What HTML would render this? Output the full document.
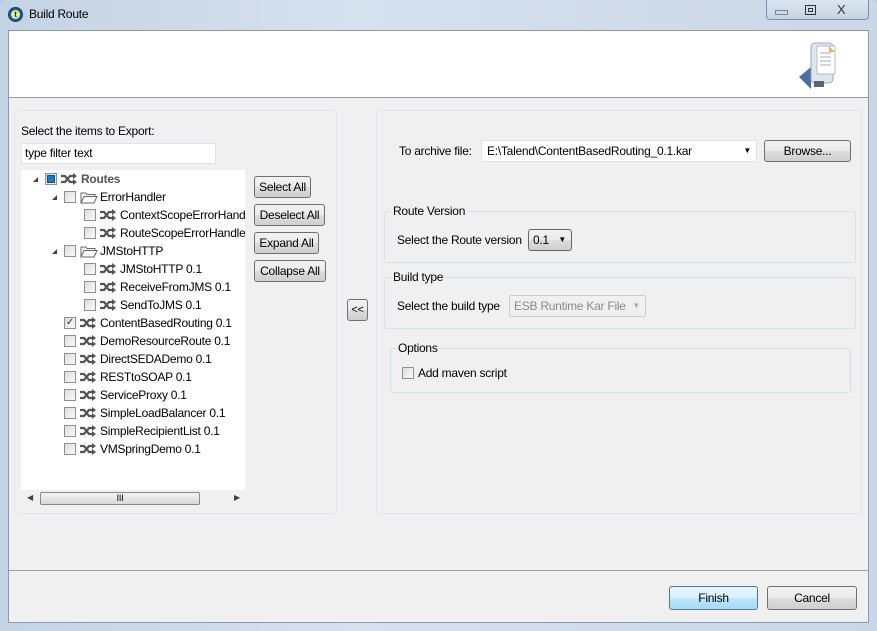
<!DOCTYPE html><html><head><style>
body{margin:0;width:877px;height:631px;overflow:hidden;font-family:"Liberation Sans",sans-serif;font-size:12px;letter-spacing:-0.25px;color:#000;background:#b9cbe0}
.a{position:absolute}
.win{left:0;top:0;width:877px;height:631px;background:linear-gradient(90deg,#c4d3e4,#d6e1ee 40%,#c9d7e7);border-radius:6px 6px 0 0}
.client{left:8px;top:30px;width:861px;height:593px;background:#f0f0f0;border:1px solid #8a9bb0;box-sizing:border-box}
.btn{position:absolute;border:1px solid #707070;border-radius:3px;background:linear-gradient(#f2f2f2,#ebebeb 50%,#dddddd 51%,#cfcfcf);box-sizing:border-box;text-align:center;line-height:20px}
.cb{position:absolute;width:11px;height:11px;border:1px solid #8f8f8f;background:linear-gradient(135deg,#ddd,#fbfbfb);box-sizing:border-box}
.grp{position:absolute;border:1px solid #d5dfe5;border-radius:3px;box-sizing:border-box}
.gl{position:absolute;background:#f0f0f0;padding:0 2px}
.tri{position:absolute;width:0;height:0;border-left:5px solid transparent;border-bottom:5px solid #444}
</style></head><body>
<div class="a win"></div>
<div class="a" style="left:8px;top:7px;width:15px;height:15px;border-radius:50%;background:#1a5a9e;border:1px solid #0c3b6e;box-sizing:border-box"><div style="margin:2px;width:9px;height:9px;border-radius:50%;background:#e8f080;font-size:8px;line-height:9px;text-align:center;font-weight:bold;color:#124">t</div></div>
<div class="a" style="left:29px;top:7px;font-size:12px">Build Route</div>
<div class="a" style="left:766px;top:0;width:103px;height:20px;border:1px solid #7f90a6;border-top:none;border-radius:0 0 4px 4px;box-sizing:border-box;background:linear-gradient(#dbe5f0,#c5d3e3)"></div>
<div class="a" style="left:775px;top:10px;width:11px;height:3px;border:1px solid #7a8799"></div>
<div class="a" style="left:805px;top:5px;width:9px;height:8px;border:1px solid #333"><div style="margin:2px;width:5px;height:4px;border:1px solid #333;box-sizing:border-box"></div></div>
<div class="a" style="left:837px;top:2px;font-size:13px;color:#333">X</div>
<div class="a client">
<div class="a" style="left:0;top:0;width:859px;height:66px;background:#fff;border-bottom:1px solid #9a9a9a"></div>
<svg class="a" style="left:780px;top:6px" width="60" height="55"><path d="M10 40 L22 30 L22 52Z" fill="#4a6fa0"/><rect x="22" y="6" width="22" height="40" rx="4" fill="#dde6f0" stroke="#9aa8b8"/><rect x="28" y="9" width="18" height="28" fill="#fff" stroke="#bbb"/><path d="M40 9 L46 15 L40 15Z" fill="#f0b060"/><line x1="31" y1="16" x2="42" y2="16" stroke="#aab"/><line x1="31" y1="20" x2="42" y2="20" stroke="#aab"/><line x1="31" y1="24" x2="42" y2="24" stroke="#aab"/><line x1="31" y1="28" x2="42" y2="28" stroke="#aab"/><rect x="25" y="44" width="10" height="6" fill="#567"/></svg>
</div>
<div class="grp" style="left:14px;top:110px;width:323px;height:404px;border-color:#dfe5ea"></div>
<div class="a" style="left:21px;top:124px">Select the items to Export:</div>
<div class="a" style="left:21px;top:143px;width:195px;height:21px;background:#fff;border:1px solid #dde3e8;box-sizing:border-box;padding-left:3px;line-height:19px">type filter text</div>
<div class="a" style="left:21px;top:170px;width:224px;height:337px;background:#fff"></div>
<div class="a" style="left:21px;top:490px;width:224px;height:17px;background:#f0f0f0"></div>
<div class="a" style="left:40px;top:492px;width:160px;height:13px;border:1px solid #888;border-radius:2px;box-sizing:border-box;background:linear-gradient(#f4f4f4,#d8d8d8);font-size:9px;text-align:center;line-height:11px">III</div>
<div class="a" style="left:27px;top:493px;font-size:8px;color:#444">◀</div>
<div class="a" style="left:234px;top:493px;font-size:8px;color:#444">▶</div>
<div id="tree"></div>
<div class="btn" style="left:254px;top:176px;width:57px;height:22px">Select All</div>
<div class="btn" style="left:254px;top:204px;width:71px;height:22px">Deselect All</div>
<div class="btn" style="left:254px;top:232px;width:65px;height:22px">Expand All</div>
<div class="btn" style="left:254px;top:260px;width:72px;height:22px">Collapse All</div>
<div class="btn" style="left:347px;top:299px;width:21px;height:22px;font-size:11px">&lt;&lt;</div>
<div class="grp" style="left:376px;top:110px;width:486px;height:404px;border-color:#dfe5ea"></div>
<div class="a" style="left:399px;top:144px">To archive file:</div>
<div class="a" style="left:481px;top:140px;width:276px;height:22px;background:#fff;border:1px solid #e3e3e3;box-sizing:border-box;padding-left:5px;line-height:20px">E:\Talend\ContentBasedRouting_0.1.kar<span style="position:absolute;right:5px;font-size:8px">▼</span></div>
<div class="btn" style="left:764px;top:140px;width:87px;height:22px">Browse...</div>
<div class="grp" style="left:384px;top:211px;width:472px;height:52px"></div>
<div class="gl" style="left:391px;top:204px">Route Version</div>
<div class="a" style="left:397px;top:233px">Select the Route version</div>
<div class="btn" style="left:528px;top:229px;width:44px;height:22px;border-color:#666;text-align:left;padding-left:4px">0.1<span style="position:absolute;right:5px;font-size:8px">▼</span></div>
<div class="grp" style="left:384px;top:277px;width:472px;height:52px"></div>
<div class="gl" style="left:391px;top:270px">Build type</div>
<div class="a" style="left:397px;top:299px">Select the build type</div>
<div class="a" style="left:509px;top:295px;width:137px;height:22px;border:1px solid #ccc;border-radius:2px;box-sizing:border-box;color:#8a8a8a;padding-left:4px;line-height:20px">ESB Runtime Kar File<span style="position:absolute;right:5px;font-size:8px;color:#aaa">▼</span></div>
<div class="grp" style="left:390px;top:348px;width:461px;height:45px"></div>
<div class="gl" style="left:396px;top:341px">Options</div>
<div class="cb" style="left:402px;top:367px;width:12px;height:12px"></div>
<div class="a" style="left:418px;top:366px">Add maven script</div>
<div class="a" style="left:9px;top:570px;width:859px;height:1px;background:#a0a0a0"></div>
<div class="btn" style="left:669px;top:586px;width:89px;height:24px;border-color:#3c7fb1;background:linear-gradient(#eaf6fd,#d9f0fc 50%,#bee6fd 51%,#a7d9f5);line-height:22px">Finish</div>
<div class="btn" style="left:767px;top:586px;width:90px;height:24px;line-height:22px">Cancel</div>
<script>
var rows=[[0,'Routes',1,'r'],[1,'ErrorHandler',1,'f'],[2,'ContextScopeErrorHandler 0.1'],[2,'RouteScopeErrorHandler 0.1'],[1,'JMStoHTTP',1,'f'],[2,'JMStoHTTP 0.1'],[2,'ReceiveFromJMS 0.1'],[2,'SendToJMS 0.1'],[1,'ContentBasedRouting 0.1',0,'c'],[1,'DemoResourceRoute 0.1'],[1,'DirectSEDADemo 0.1'],[1,'RESTtoSOAP 0.1'],[1,'ServiceProxy 0.1'],[1,'SimpleLoadBalancer 0.1'],[1,'SimpleRecipientList 0.1'],[1,'VMSpringDemo 0.1']];
var sh='<svg width="16" height="12" viewBox="0 0 16 12"><path d="M0 3h4l5 6h3M0 9h4l5-6h3" stroke="#555" stroke-width="2.2" fill="none"/><path d="M12 0l4 3-4 3zM12 6l4 3-4 3z" fill="#555"/></svg>';
var fo='<svg width="18" height="13" viewBox="0 0 18 13"><path d="M1 2h5l1 1.5h8v2H4L1 12z M1 12l3-6.5h13L14 12z" fill="#fff" stroke="#666"/></svg>';
var h='';rows.forEach(function(r,i){var y=170+i*18,l=r[0],cx=l==0?45:(l==1?64:84);
h+='<div class="a" style="left:21px;top:'+y+'px;width:224px;height:18px;overflow:hidden">';
if(r[2])h+='<div class="tri" style="left:'+(cx-33)+'px;top:7px"></div>';
var inner=r[3]=='r'?'<div style="margin:1px;width:8px;height:8px;background:#1d78c4;border:1px solid #0b4f8a;box-sizing:border-box"></div>':(r[3]=='c'?'<div style="font-size:10px;line-height:10px;text-align:center;color:#333">✓</div>':'');
h+='<div class="cb" style="left:'+(cx-21)+'px;top:3px;width:12px;height:12px">'+inner+'</div>';
h+='<div class="a" style="left:'+(cx-5)+'px;top:3px">'+(r[3]=='f'?fo:sh)+'</div>';
h+='<div class="a" style="left:'+(cx+15)+'px;top:0;line-height:18px;white-space:nowrap;'+(r[3]=='r'?'font-weight:bold;color:#555':'')+'">'+r[1]+'</div></div>';});
document.getElementById('tree').innerHTML=h;
</script>
</body></html>
